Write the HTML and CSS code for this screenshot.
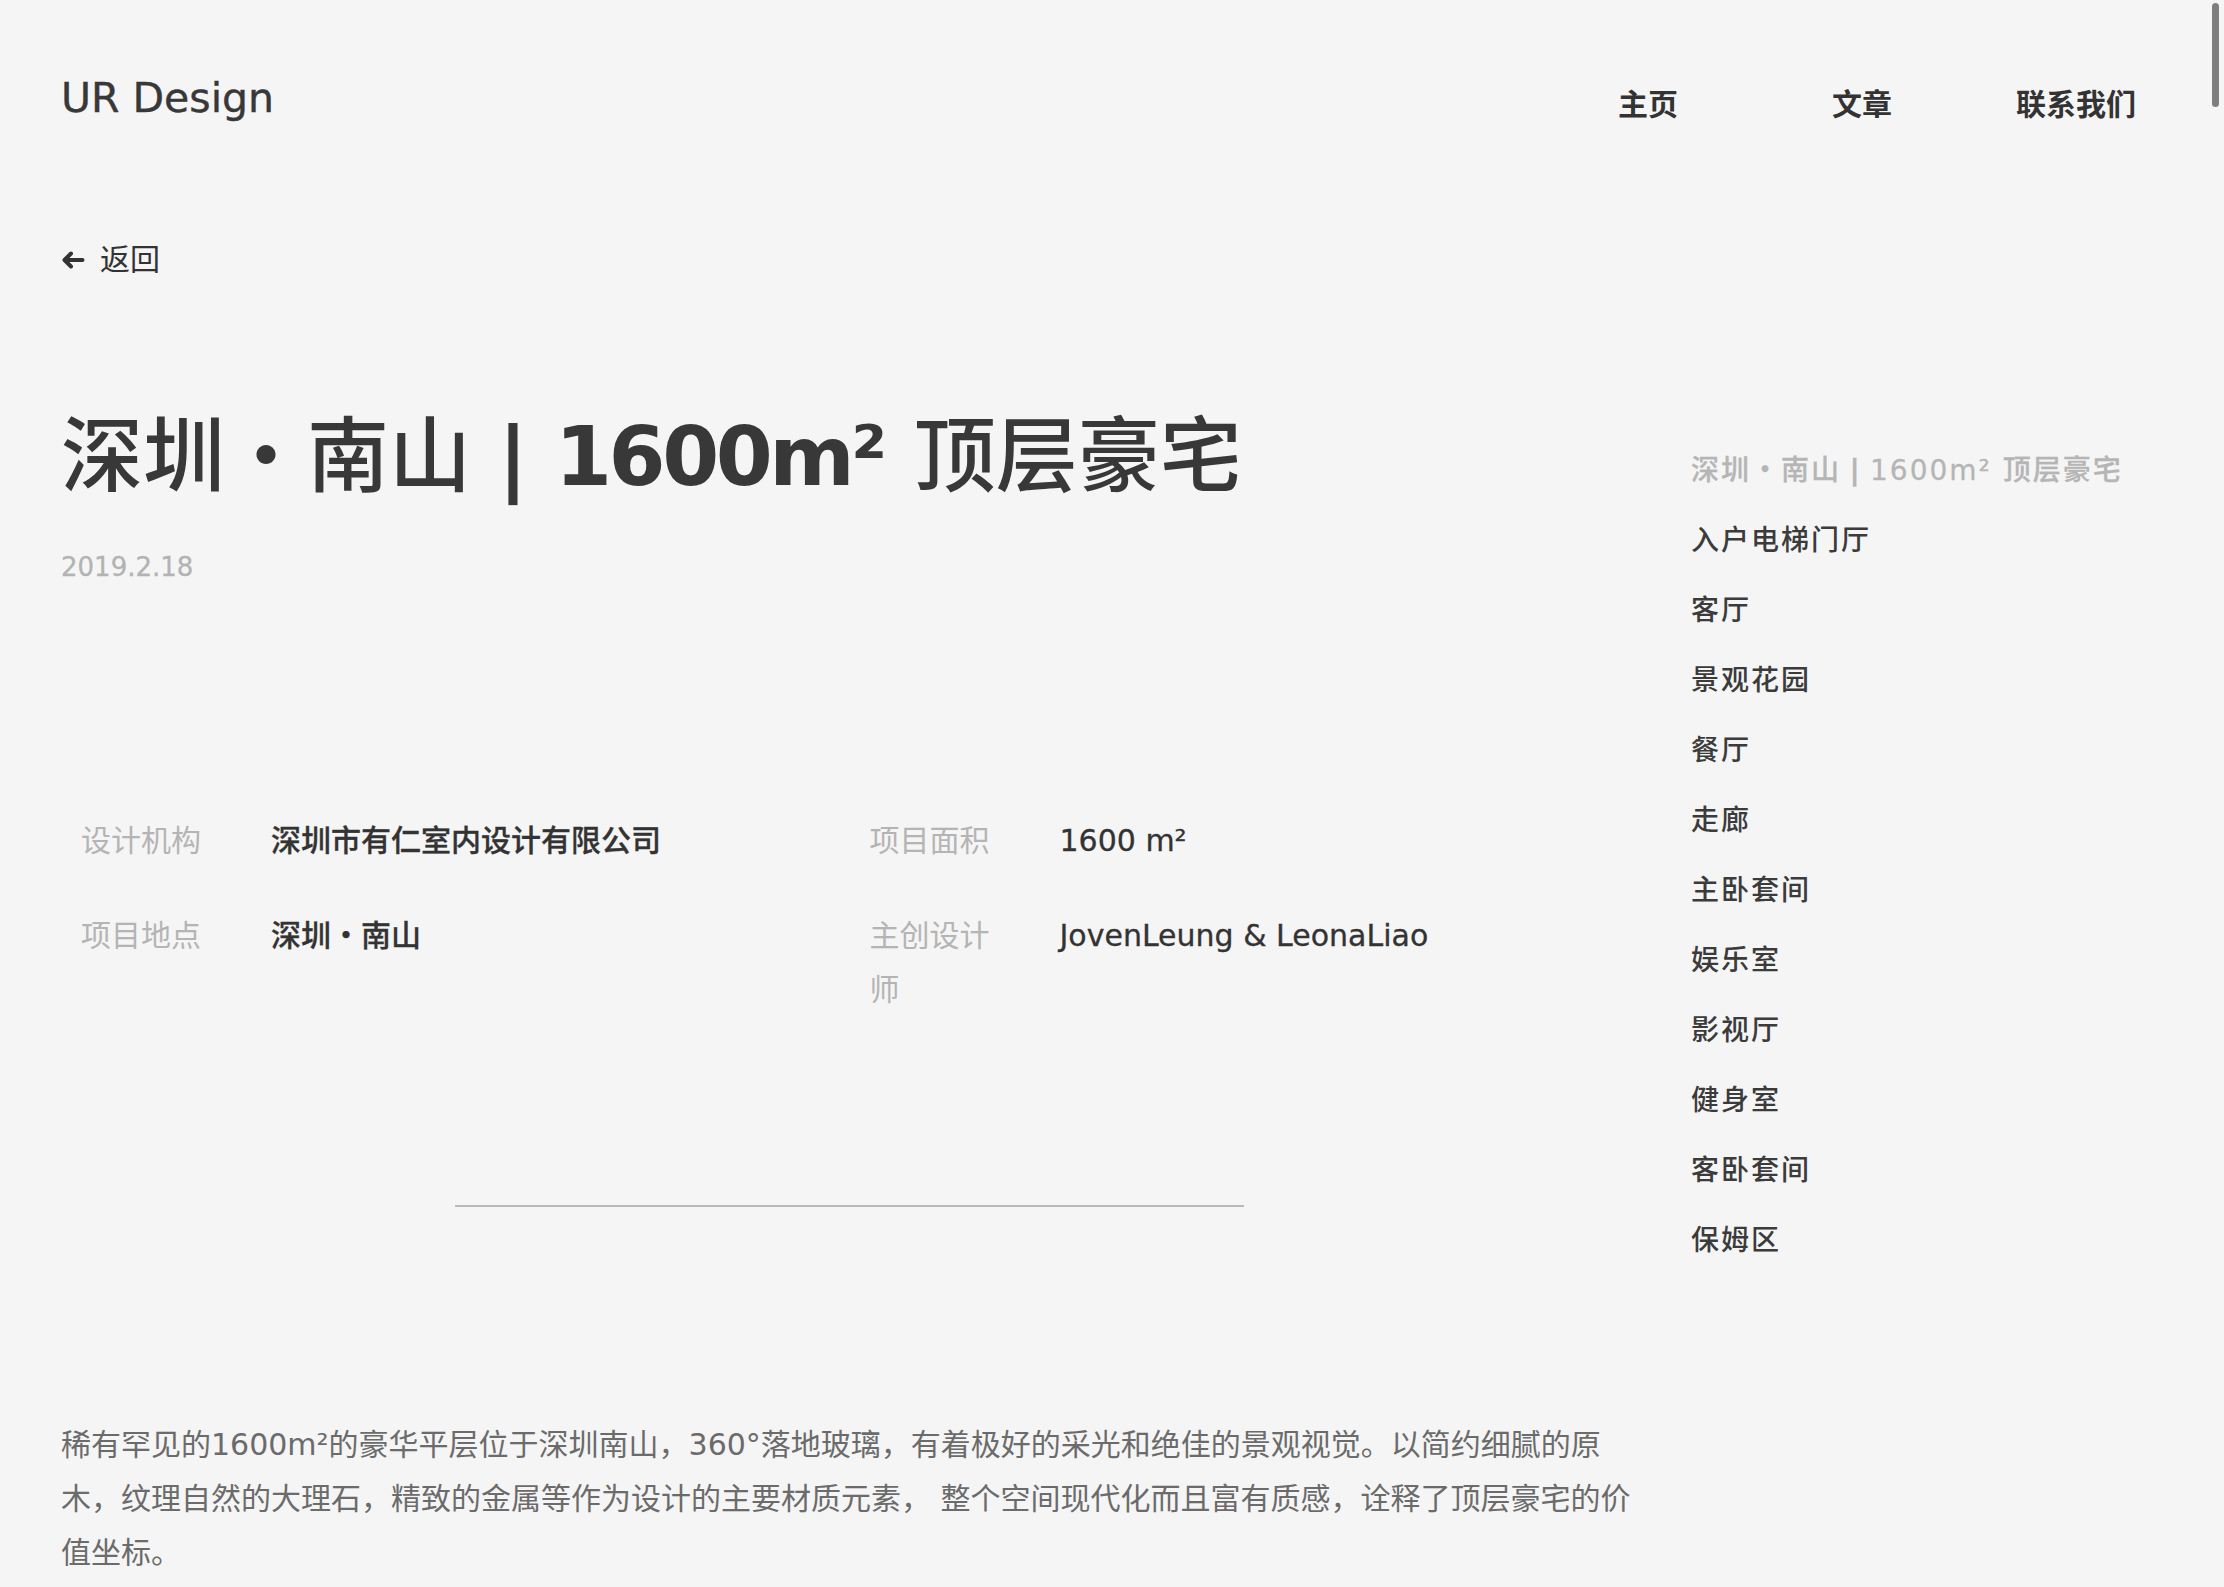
FILE: index.html
```html
<!DOCTYPE html>
<html lang="zh-CN">
<head>
<meta charset="utf-8">
<title>深圳・南山｜1600m² 顶层豪宅 - UR Design</title>
<link rel="stylesheet" href="styles.css">
</head>
<body>
<div class="page">
  <header class="header">
    <a class="logo" href="#">UR Design</a>
    <nav class="nav">
      <a href="#">主页</a>
      <a href="#">文章</a>
      <a href="#">联系我们</a>
    </nav>
  </header>
  <div class="layout">
    <main class="main">
      <a class="back" href="#">
        <svg viewBox="0 0 24 18" aria-hidden="true"><path d="M21.5 9H3.5M10 2.5L3.5 9l6.5 6.5" fill="none" stroke="#333" stroke-width="4" stroke-linecap="round" stroke-linejoin="round"/></svg>
        <span>返回</span>
      </a>
      <h1 class="title">深圳・南山<span class="sep">|</span><span class="num">1600m²</span> 顶层豪宅</h1>
      <div class="date">2019.2.18</div>
      <dl class="info">
        <div class="info-item"><dt>设计机构</dt><dd>深圳市有仁室内设计有限公司</dd></div>
        <div class="info-item"><dt>项目面积</dt><dd>1600 m²</dd></div>
        <div class="info-item"><dt>项目地点</dt><dd>深圳・南山</dd></div>
        <div class="info-item"><dt>主创设计师</dt><dd>JovenLeung &amp; LeonaLiao</dd></div>
      </dl>
      <hr class="divider">
      <p class="intro">稀有罕见的1600m²的豪华平层位于深圳南山，360°落地玻璃，有着极好的采光和绝佳的景观视觉。以简约细腻的原木，纹理自然的大理石，精致的金属等作为设计的主要材质元素， 整个空间现代化而且富有质感，诠释了顶层豪宅的价值坐标。</p>
      <div class="photos"></div>
    </main>
    <aside class="toc">
      <ul>
        <li class="current">深圳・南山<span class="sep">|</span>1600m² 顶层豪宅</li>
        <li>入户电梯门厅</li>
        <li>客厅</li>
        <li>景观花园</li>
        <li>餐厅</li>
        <li>走廊</li>
        <li>主卧套间</li>
        <li>娱乐室</li>
        <li>影视厅</li>
        <li>健身室</li>
        <li>客卧套间</li>
        <li>保姆区</li>
      </ul>
    </aside>
  </div>
</div>
<div class="scroll-thumb" aria-hidden="true"></div>
</body>
</html>
```

FILE: styles.css
```css
html {
  background: #f5f5f5;
}

body {
  margin: 0;
  background: #f5f5f5;
  color: #333;
  font-family: "DejaVu Sans", "Noto Sans CJK SC", sans-serif;
}

a {
  color: inherit;
  text-decoration: none;
}

.page {
  width: 2122px;
  margin-left: 61px;
}

/* overlay scrollbar thumb */
.scroll-thumb {
  position: fixed;
  top: 3px;
  right: 5px;
  width: 7px;
  height: 104px;
  border-radius: 4px;
  background: #7f7f7f;
}

/* header */
.header {
  display: flex;
  justify-content: space-between;
  align-items: flex-start;
  padding-top: 74px;
}

.logo {
  font-size: 41px;
  line-height: 48px;
  color: #383838;
  -webkit-text-stroke: 0.4px #383838;
}

.nav {
  display: flex;
  padding-top: 7px;
}

.nav a {
  width: 214px;
  text-align: center;
  font-size: 30px;
  line-height: 48px;
  font-weight: 600;
  color: #333;
}

/* layout */
.layout {
  display: grid;
  grid-template-columns: 1577px 1fr;
  column-gap: 53px;
  align-items: start;
}

.back {
  display: flex;
  align-items: center;
  gap: 15px;
  width: max-content;
  margin-top: 107px;
  font-size: 30px;
  line-height: 48px;
  color: #333;
}

.back svg {
  width: 24px;
  height: 18px;
  display: block;
}

.title {
  margin: 123px 0 0;
  font-size: 82px;
  line-height: 100px;
  font-weight: 500;
  color: #383838;
  white-space: nowrap;
}

.title .sep {
  font-weight: 700;
  margin: 0 0.33em;
}

.title .num {
  font-weight: 700;
  letter-spacing: -3.5px;
  margin-right: 4px;
}

.date {
  margin-top: 40px;
  font-size: 26px;
  line-height: 40px;
  color: #b3b3b3;
  -webkit-text-stroke: 0.3px #b3b3b3;
}

.info {
  display: grid;
  grid-template-columns: 1fr 1fr;
  row-gap: 41px;
  margin: 227px 0 0;
}

.info-item {
  display: flex;
  padding-left: 20px;
  font-size: 30px;
  line-height: 54px;
}

.info-item dt {
  flex-shrink: 0;
  width: 130px;
  margin-right: 60px;
  color: #b4b4b4;
}

.info-item dd {
  margin: 0;
  color: #333;
  font-weight: 500;
  -webkit-text-stroke: 0.3px #333;
}

.divider {
  width: 50%;
  height: 2px;
  margin: 188px auto 0;
  border: 0;
  background: #b9b9b9;
}

.intro {
  margin: 211px 0 0;
  font-size: 30px;
  line-height: 54px;
  color: #6b6b6b;
}

.photos {
  height: 1200px;
  margin-top: 120px;
}

/* table of contents */
.toc {
  padding-top: 307px;
}

.toc ul {
  list-style: none;
  margin: 0;
  padding: 0;
}

.toc li {
  font-size: 28px;
  line-height: 70px;
  letter-spacing: 2px;
  font-weight: 500;
  color: #3b3b3b;
  white-space: nowrap;
}

.toc li.current {
  color: #b5b5b5;
  -webkit-text-stroke: 0.3px #b5b5b5;
}

.toc .sep {
  font-weight: 700;
  margin: 0 0.3em;
}
```
